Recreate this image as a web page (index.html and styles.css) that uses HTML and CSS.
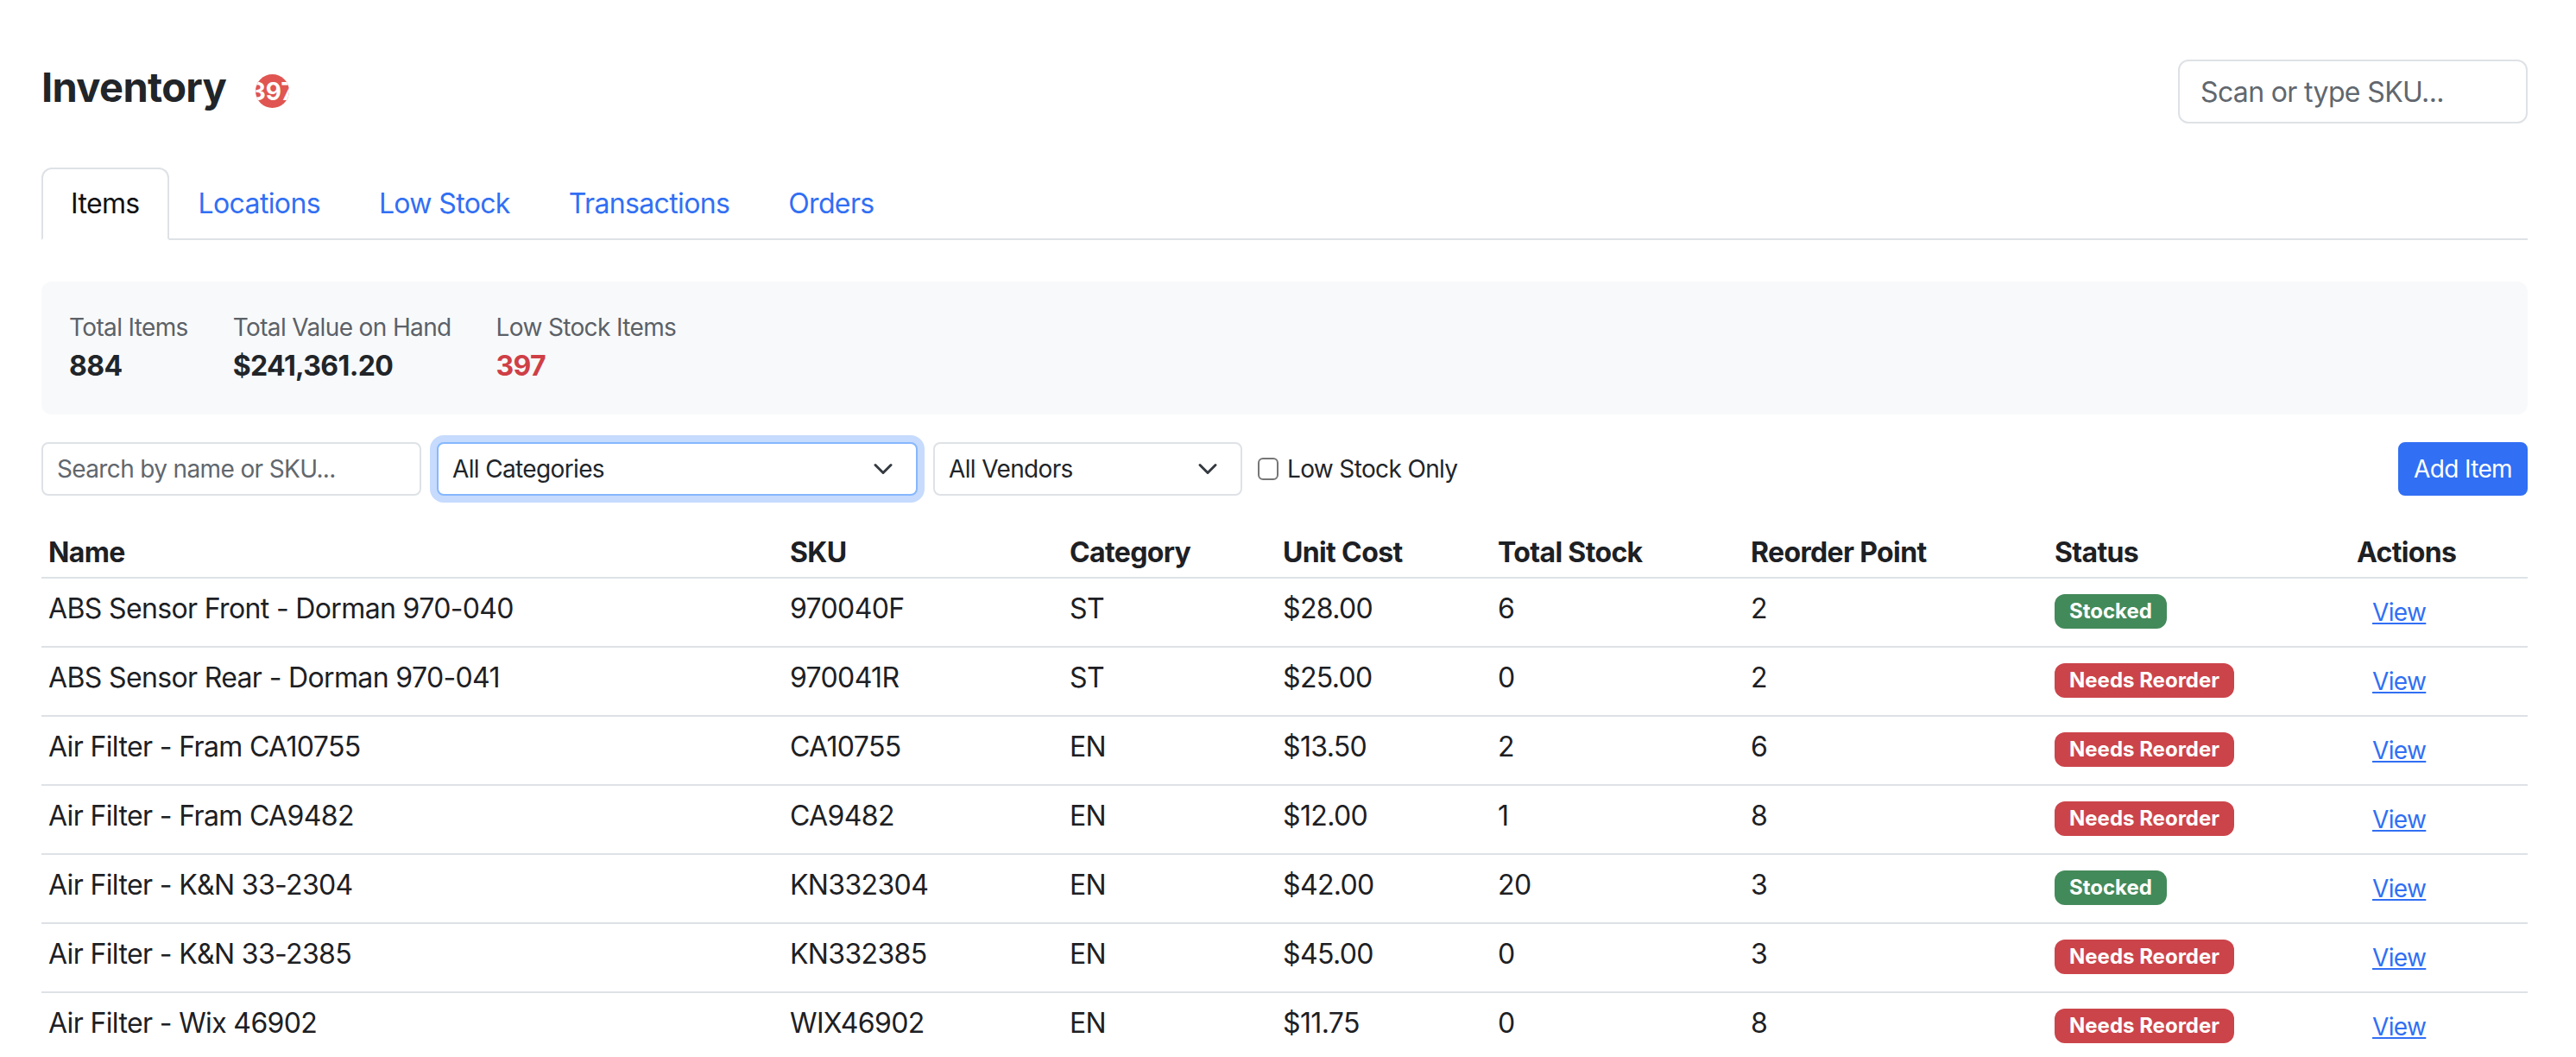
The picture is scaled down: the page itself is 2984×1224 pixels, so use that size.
FILE: index.html
```html
<!DOCTYPE html>
<html lang="en">
<head>
  <meta charset="UTF-8">
  <meta name="viewport" content="width=device-width, initial-scale=1.0">
  <title>Inventory</title>
  <link rel="stylesheet" href="styles.css">
</head>
<body>
  <div class="page">
    <header class="page-head">
      <div class="title-group">
        <h1>Inventory</h1>
        <span class="count-badge">397</span>
      </div>
      <input type="text" class="scan-input" placeholder="Scan or type SKU...">
    </header>

    <ul class="tabs">
      <li><a href="#" class="tab active">Items</a></li>
      <li><a href="#" class="tab">Locations</a></li>
      <li><a href="#" class="tab">Low Stock</a></li>
      <li><a href="#" class="tab">Transactions</a></li>
      <li><a href="#" class="tab">Orders</a></li>
    </ul>

    <div class="stats">
      <div class="stat">
        <div class="stat-label">Total Items</div>
        <div class="stat-value">884</div>
      </div>
      <div class="stat">
        <div class="stat-label">Total Value on Hand</div>
        <div class="stat-value">$241,361.20</div>
      </div>
      <div class="stat">
        <div class="stat-label">Low Stock Items</div>
        <div class="stat-value danger">397</div>
      </div>
    </div>

    <div class="filters">
      <input type="text" class="field search" placeholder="Search by name or SKU...">
      <div class="select-wrap cat focused">
        <select class="field"><option>All Categories</option></select>
        <svg width="32" height="24" viewBox="0 0 16 16"><path d="m2 5 6 6 6-6" fill="none" stroke="#343a40" stroke-width="2" stroke-linecap="round" stroke-linejoin="round"/></svg>
      </div>
      <div class="select-wrap vendor">
        <select class="field"><option>All Vendors</option></select>
        <svg width="32" height="24" viewBox="0 0 16 16"><path d="m2 5 6 6 6-6" fill="none" stroke="#343a40" stroke-width="2" stroke-linecap="round" stroke-linejoin="round"/></svg>
      </div>
      <label class="check"><input type="checkbox">Low Stock Only</label>
      <button class="btn-add">Add Item</button>
    </div>

    <table class="items">
      <thead>
        <tr>
          <th>Name</th>
          <th>SKU</th>
          <th>Category</th>
          <th>Unit Cost</th>
          <th>Total Stock</th>
          <th>Reorder Point</th>
          <th>Status</th>
          <th>Actions</th>
        </tr>
      </thead>
      <tbody>
        <tr>
          <td>ABS Sensor Front - Dorman 970-040</td><td>970040F</td><td>ST</td><td>$28.00</td><td>6</td><td>2</td>
          <td><span class="status ok">Stocked</span></td><td><a href="#" class="view">View</a></td>
        </tr>
        <tr>
          <td>ABS Sensor Rear - Dorman 970-041</td><td>970041R</td><td>ST</td><td>$25.00</td><td>0</td><td>2</td>
          <td><span class="status low">Needs Reorder</span></td><td><a href="#" class="view">View</a></td>
        </tr>
        <tr>
          <td>Air Filter - Fram CA10755</td><td>CA10755</td><td>EN</td><td>$13.50</td><td>2</td><td>6</td>
          <td><span class="status low">Needs Reorder</span></td><td><a href="#" class="view">View</a></td>
        </tr>
        <tr>
          <td>Air Filter - Fram CA9482</td><td>CA9482</td><td>EN</td><td>$12.00</td><td>1</td><td>8</td>
          <td><span class="status low">Needs Reorder</span></td><td><a href="#" class="view">View</a></td>
        </tr>
        <tr>
          <td>Air Filter - K&amp;N 33-2304</td><td>KN332304</td><td>EN</td><td>$42.00</td><td>20</td><td>3</td>
          <td><span class="status ok">Stocked</span></td><td><a href="#" class="view">View</a></td>
        </tr>
        <tr>
          <td>Air Filter - K&amp;N 33-2385</td><td>KN332385</td><td>EN</td><td>$45.00</td><td>0</td><td>3</td>
          <td><span class="status low">Needs Reorder</span></td><td><a href="#" class="view">View</a></td>
        </tr>
        <tr>
          <td>Air Filter - Wix 46902</td><td>WIX46902</td><td>EN</td><td>$11.75</td><td>0</td><td>8</td>
          <td><span class="status low">Needs Reorder</span></td><td><a href="#" class="view">View</a></td>
        </tr>
      </tbody>
    </table>
  </div>
</body>
</html>
```

FILE: styles.css
```css
body { margin: 0; background: #fff; color: #1d2024; font-family: Inter, "Noto Sans", sans-serif; font-size: 32px; line-height: 1.5; letter-spacing: -0.02em; }
.page { padding: 69px 56px 0 48px; }

.page-head { display: flex; justify-content: space-between; align-items: center; }
.title-group { display: flex; align-items: center; gap: 34px; }
.title-group h1 { margin: 0 0 10px; font-size: 47px; font-weight: 700; line-height: 1.2; color: #212529; }
.count-badge { display: flex; align-items: center; justify-content: center; width: 39px; height: 39px; border-radius: 50%; overflow: hidden; background: #e05551; color: #fff; font-size: 28px; font-weight: 700; line-height: 1; letter-spacing: 0; }
.scan-input { box-sizing: border-box; width: 405px; height: 74px; padding: 0 24px; border: 2px solid #dee2e6; border-radius: 12px; font: inherit; letter-spacing: inherit; color: #212529; }
.scan-input::placeholder { color: #61676e; }

.tabs { display: flex; list-style: none; margin: 51px 0 0; padding: 0; border-bottom: 2px solid #dee2e6; }
.tab { display: block; margin-bottom: -2px; padding: 16px 32px; border: 2px solid transparent; border-radius: 12px 12px 0 0; color: #316ff4; text-decoration: none; }
.tab.active { color: #111; background: #fff; border-color: #dee2e6 #dee2e6 #fff; }

.stats { display: flex; gap: 52px; margin-top: 48px; padding: 32px; background: #f8f9fa; border-radius: 12px; }
.stat-label { font-size: 28px; color: #5b6168; }
.stat-value { font-weight: 700; color: #212529; }
.stat-value.danger { color: #cf3f46; }

.filters { display: flex; align-items: center; gap: 18px; margin-top: 32px; }
.field { box-sizing: border-box; height: 62px; padding: 0 16px; border: 2px solid #dee2e6; border-radius: 8px; background: #fff; font: inherit; font-size: 28px; letter-spacing: inherit; color: #212529; }
.field::placeholder { color: #61676e; }
.search { width: 440px; }
.select-wrap { position: relative; }
.select-wrap select { width: 100%; padding-right: 64px; appearance: none; }
.select-wrap svg { position: absolute; right: 24px; top: 19px; pointer-events: none; }
.cat { width: 557px; }
.vendor { width: 358px; }
.focused select { border-color: #86b7fe; box-shadow: 0 0 0 8px #c6dbfd; outline: none; }
.check { display: flex; align-items: center; gap: 10px; font-size: 28px; color: #212529; }
.check input { margin: 0; width: 24px; height: 26px; border: 2px solid #767676; border-radius: 6px; appearance: none; background: #fff; }
.btn-add { margin-left: auto; height: 62px; padding: 0 16px; border: 2px solid #316ff4; border-radius: 8px; background: #316ff4; color: #fff; font: inherit; font-size: 28px; letter-spacing: inherit; }

.items { width: 100%; margin-top: 30px; border-collapse: collapse; table-layout: fixed; }
.items th, .items td { padding: 8px; text-align: left; vertical-align: middle; border-bottom: 2px solid #dee2e6; white-space: nowrap; }
.items th { padding: 12px 8px 4px; font-weight: 700; }
.items td:not(:last-child) { padding: 4px 8px 12px; }
.items th:nth-child(1) { width: 843px; }
.items th:nth-child(2) { width: 308px; }
.items th:nth-child(3) { width: 231px; }
.items th:nth-child(4) { width: 233px; }
.items th:nth-child(5) { width: 277px; }
.items th:nth-child(6) { width: 336px; }
.items th:nth-child(7) { width: 334px; }
.items th:nth-child(8) { width: 190px; }
.status { display: inline-block; padding: 8px 17px; border-radius: 12px; color: #fff; font-size: 24px; font-weight: 700; line-height: 1; letter-spacing: 0; }
.status.ok { background: #438a5a; }
.status.low { background: #cb444a; }
.view { display: inline-block; padding: 8px 16px; border: 2px solid transparent; color: #316ff4; font-size: 28px; line-height: 42px; }
```
